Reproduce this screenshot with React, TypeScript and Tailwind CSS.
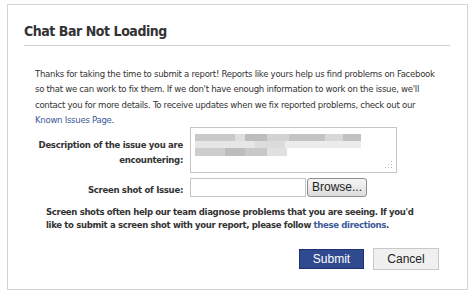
export default function App() {
  return (
    <div className="w-[474px] h-[298px] bg-white pt-[4px] pl-[7px] font-['DejaVu_Sans_Condensed','DejaVu_Sans',sans-serif] text-[#333]">
      <div className="w-[461px] h-[286px] border border-[#d4d4d4] px-[16px]">
        {/* Title */}
        <h1 className="mt-[17px] text-[14px] font-bold leading-[18px] text-[#333] tracking-[-0.45px]">
          Chat Bar Not Loading
        </h1>
        <div className="mt-[5px] mr-[1px] h-px bg-[#cfcfcf]" />

        {/* Intro */}
        <p className="mt-[20px] pl-[11px] whitespace-nowrap text-[9.5px] leading-[15.3px] tracking-[-0.28px] text-[#333]">
          Thanks for taking the time to submit a report! Reports like yours help us find problems on Facebook
          <br />
          so that we can work to fix them. If we don't have enough information to work on the issue, we'll
          <br />
          contact you for more details. To receive updates when we fix reported problems, check out our
          <br />
          <span className="text-[#3b5998]">Known Issues Page</span>.
        </p>

        {/* Form */}
        <div className="flex">
          <div className="w-[159px] pt-[10px] text-right text-[9.5px] font-bold leading-[15px] tracking-[-0.3px]">
            Description of the issue you are encountering:
          </div>
          <div className="ml-[7px] relative w-[207px] h-[46px] border border-[#c6c6c6] bg-white">
            <div className="absolute left-[4px] top-[6px] flex flex-col">
              <div className="flex h-[7px]">
                <div className="w-[40px] bg-[#c9c9c9]" />
                <div className="w-[10px] bg-[#dedede]" />
                <div className="w-[22px] bg-[#bdbdbd]" />
                <div className="w-[22px] bg-[#d2d2d2]" />
                <div className="w-[36px] bg-[#c4c4c4]" />
                <div className="w-[18px] bg-[#d8d8d8]" />
                <div className="w-[18px] bg-[#c2c2c2]" />
              </div>
              <div className="flex h-[7px]">
                <div className="w-[60px] bg-[#e6e6e6]" />
                <div className="w-[30px] bg-[#dcdcdc]" />
                <div className="w-[76px] bg-[#ececec]" />
              </div>
              <div className="flex h-[8px]">
                <div className="w-[30px] bg-[#cdcdcd]" />
                <div className="w-[20px] bg-[#bdbdbd]" />
                <div className="w-[22px] bg-[#c8c8c8]" />
                <div className="w-[20px] bg-[#e0e0e0]" />
              </div>
            </div>
            <svg className="absolute right-[3px] bottom-[3px]" width="8" height="8" viewBox="0 0 8 8">
              <rect x="6" y="0" width="1" height="1" fill="#bbb" />
              <rect x="3" y="3" width="1" height="1" fill="#bbb" />
              <rect x="6" y="3" width="1" height="1" fill="#bbb" />
              <rect x="0" y="6" width="1" height="1" fill="#bbb" />
              <rect x="3" y="6" width="1" height="1" fill="#bbb" />
              <rect x="6" y="6" width="1" height="1" fill="#bbb" />
            </svg>
          </div>
        </div>

        <div className="mt-[5px] flex items-center">
          <div className="w-[159px] pt-[3px] text-right text-[9.5px] font-bold leading-[15px] tracking-[-0.3px]">
            Screen shot of Issue:
          </div>
          <div className="ml-[7px] w-[116px] h-[19px] border border-[#c6c6c6] bg-white" />
          <button className="ml-[1px] w-[60px] h-[19px] rounded-[3px] border border-[#8e8e8e] bg-gradient-to-b from-[#f6f6f6] to-[#dcdcdc] font-['Liberation_Sans',sans-serif] text-[12px] leading-[17px] text-[#222]">
            Browse...
          </button>
        </div>

        <p className="mt-[8px] pl-[22px] pr-[20px] text-[9.5px] font-bold leading-[13px] tracking-[-0.35px] text-[#333]">
          Screen shots often help our team diagnose problems that you are seeing. If you'd like to submit a
          screen shot with your report, please follow <span className="text-[#3b5998]">these directions</span>.
        </p>

        <div className="mt-[18px] mr-[12px] flex justify-end gap-[9px]">
          <button className="w-[65px] h-[20px] bg-[#2f4a8e] border border-[#1d3070] font-['Liberation_Sans',sans-serif] text-[12px] leading-[18px] text-white">
            Submit
          </button>
          <button className="w-[66px] h-[22px] -mt-[1px] bg-[#f0f0f0] border border-[#c8c8c8] font-['Liberation_Sans',sans-serif] text-[12px] leading-[20px] text-[#222]">
            Cancel
          </button>
        </div>
      </div>
    </div>
  );
}
